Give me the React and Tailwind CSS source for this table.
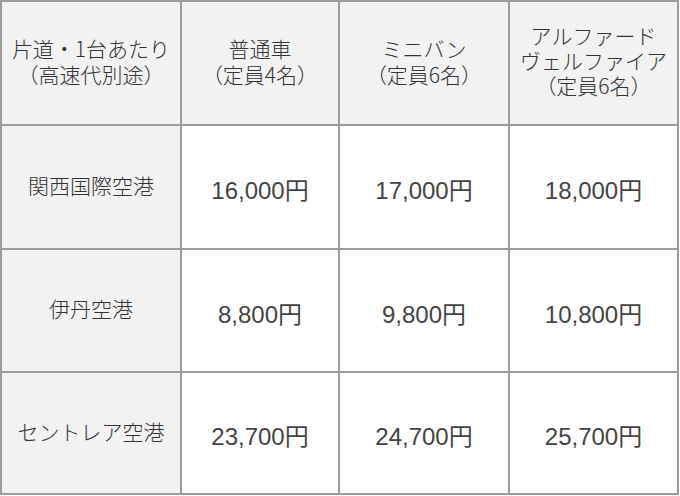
export default function App() {
  const jp = "font-['Noto_Sans_CJK_JP',sans-serif] font-light";
  const head = `bg-[#f2f2f2] flex items-center justify-center text-center text-[21px] leading-[26px] text-[#333] pb-[5px] ${jp}`;
  const cell = "bg-white flex items-center justify-center text-[24px] text-[#444] pt-[8px] font-['Liberation_Sans','Noto_Sans_CJK_JP',sans-serif]";
  const rows = [
    ["関西国際空港", "16,000円", "17,000円", "18,000円"],
    ["伊丹空港", "8,800円", "9,800円", "10,800円"],
    ["セントレア空港", "23,700円", "24,700円", "25,700円"],
  ];
  return (
    <div className="w-[680px] h-[496px] bg-white">
      <div className="w-[679px] grid grid-cols-[178px_156px_168px_167px] grid-rows-[122px_122px_121px_120px] gap-[2px] p-[2px] bg-[#9c9c9c]">
        <div className={head}>
          <div>片道・1台あたり<br />（高速代別途）</div>
        </div>
        <div className={head}>
          <div>普通車<br />（定員4名）</div>
        </div>
        <div className={head}>
          <div>ミニバン<br />（定員6名）</div>
        </div>
        <div className={head}>
          <div className="leading-[25px]">アルファード<br />ヴェルファイア<br />（定員6名）</div>
        </div>
        {rows.map((r) => [
          <div key={r[0]} className={head}>{r[0]}</div>,
          ...r.slice(1).map((p, i) => (
            <div key={r[0] + i} className={cell}>{p}</div>
          )),
        ])}
      </div>
    </div>
  );
}
